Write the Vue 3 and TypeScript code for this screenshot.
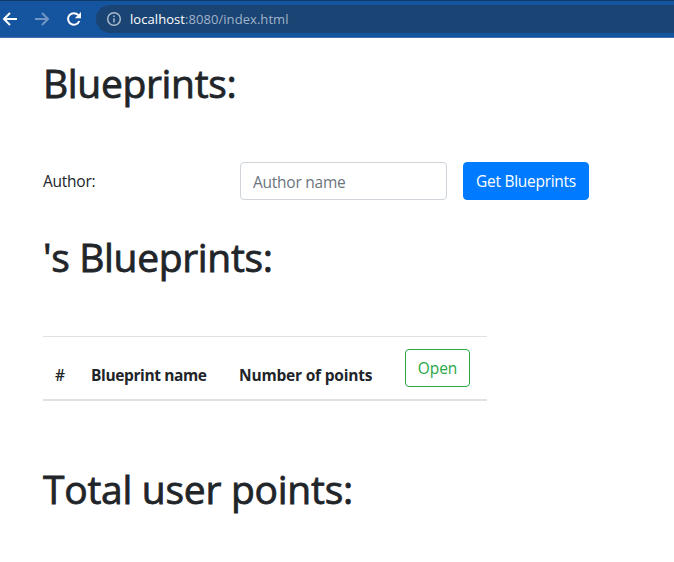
<script setup lang="ts">
import { ref } from 'vue'

const author = ref<string>('')
const host = 'localhost'
const path = ':8080/index.html'
</script>

<template>
  <div class="window">
    <header class="toolbar">
      <svg class="nav" viewBox="0 0 16 16"><path d="M15 8H2.500M8 2 2 8l6 6" /></svg>
      <svg class="nav dim" viewBox="0 0 16 16"><path d="M1 8h12.500M8 2l6 6-6 6" /></svg>
      <svg class="nav reload" viewBox="0 0 16 16"><path d="M13.300 10A5.800 5.800 0 1 1 12.300 4.200" /><path class="solid" d="M15 1v6.200H8.800z" /></svg>
      <div class="address">
        <svg class="info" viewBox="0 0 16 16"><circle cx="8" cy="8" r="6.300" /><path d="M8 7.200v4.200M8 4.400v1.600" /></svg>
        <span class="url"><b>{{ host }}</b>{{ path }}</span>
      </div>
    </header>
    <main>
      <h1>Blueprints:</h1>
      <form class="search" @submit.prevent>
        <label for="author">Author:</label>
        <input id="author" v-model="author" type="text" placeholder="Author name" />
        <button class="btn primary" type="submit">Get Blueprints</button>
      </form>
      <h1>{{ author }}'s Blueprints:</h1>
      <table>
        <thead>
          <tr>
            <th class="c1">#</th>
            <th class="c2">Blueprint name</th>
            <th class="c3">Number of points</th>
            <th class="c4"><button class="btn outline" type="button">Open</button></th>
          </tr>
        </thead>
      </table>
      <h1 class="total">Total user points:</h1>
    </main>
  </div>
</template>

<style>
body {
  background: #fff;
  overflow: hidden;
}
</style>

<style scoped>
* {
  box-sizing: border-box;
}
.window {
  height: 562px;
  overflow: hidden;
  color: #212529;
  font: 400 15.5px/24px 'Open Sans', sans-serif;
}
.toolbar {
  display: flex;
  align-items: center;
  height: 38px;
  border-top: 1px solid #0d3a69;
  border-bottom: 1px solid #4070b0;
  background: #15549e;
}
.nav {
  flex: none;
  width: 16px;
  height: 16px;
  margin-left: 2px;
  fill: none;
  stroke: #fff;
  stroke-width: 2;
}
.dim {
  margin-left: 16px;
  stroke: #7196c5;
}
.reload {
  margin-left: 16px;
}
.nav .solid {
  fill: #fff;
  stroke: none;
}
.address {
  display: flex;
  flex: 1;
  align-items: center;
  height: 28px;
  margin-left: 14px;
  padding-left: 10px;
  border-radius: 14px 0 0 14px;
  background: #1a4473;
}
.info {
  width: 16px;
  height: 16px;
  fill: none;
  stroke: #a9bace;
  stroke-width: 1.5;
}
.url {
  margin-left: 8px;
  color: #a0b3ca;
  font-size: 13px;
  letter-spacing: 0.06px;
  line-height: 20px;
}
.url b {
  color: #fff;
  font-weight: 400;
}
main {
  padding: 22px 0 0 43px;
}
h1 {
  height: 48px;
  margin: 0;
  font-size: 39px;
  font-weight: 400;
  letter-spacing: -0.34px;
  line-height: 45px;
  white-space: nowrap;
  -webkit-text-stroke: 0.8px #212529;
}
.search {
  display: flex;
  margin: 54px 0 34px;
}
label {
  width: 197px;
  padding-top: 7px;
  letter-spacing: -0.25px;
}
input {
  width: 207px;
  height: 38px;
  margin: 0 16px 0 0;
  padding: 7px 12px 5px;
  border: 1px solid #ced4da;
  border-radius: 4px;
  font: inherit;
  letter-spacing: -0.25px;
}
input::placeholder {
  color: #6c757d;
  opacity: 1;
}
.btn {
  height: 38px;
  padding: 0;
  border: 1px solid #007bff;
  border-radius: 4px;
  font: inherit;
  font-weight: 400;
  letter-spacing: -0.28px;
  white-space: nowrap;
}
.primary {
  width: 126px;
  background: #007bff;
  color: #fff;
}
.outline {
  display: block;
  width: 65px;
  border-color: #28a745;
  background: transparent;
  color: #28a745;
  letter-spacing: 0;
}
table {
  width: 444px;
  margin-top: 54px;
  border-collapse: separate;
  border-spacing: 0;
  table-layout: fixed;
}
th {
  padding: 12px 0 12px 12px;
  border-top: 1px solid #dee2e6;
  border-bottom: 2px solid #dee2e6;
  text-align: left;
  vertical-align: bottom;
  font-weight: 700;
  letter-spacing: -0.38px;
  white-space: nowrap;
}
.c1 {
  width: 36px;
  font-weight: 600;
}
.c2 {
  width: 148px;
}
.c3 {
  width: 166px;
  letter-spacing: -0.2px;
}
.total {
  margin-top: 65px;
  letter-spacing: -0.27px;
}
</style>
